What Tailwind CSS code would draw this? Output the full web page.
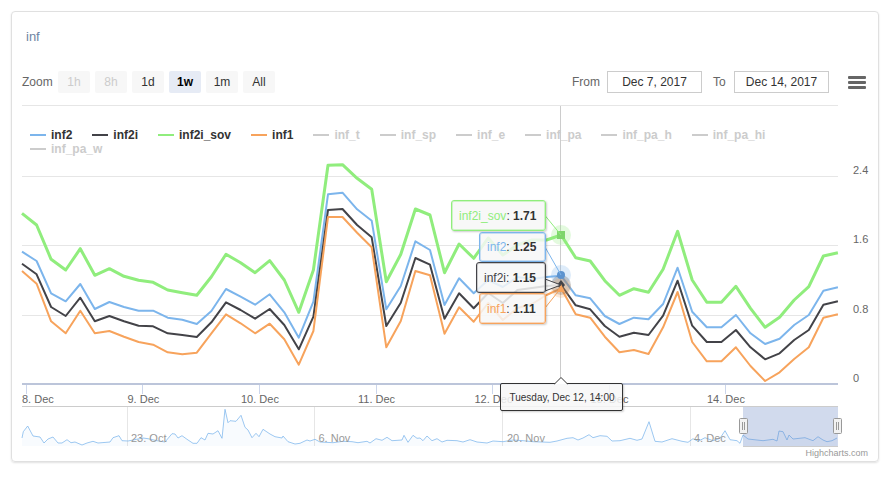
<!DOCTYPE html>
<html lang="en">
<head>
  <meta charset="UTF-8" />
  <title>inf</title>
  <script src="https://cdn.jsdelivr.net/npm/@tailwindcss/browser@4"></script>
</head>
<body class="bg-white font-['Liberation_Sans',Arial,sans-serif]">
  <div class="p-[11px] w-[885px] h-[484px]">
    <!-- Card -->
    <div class="relative w-[868px] h-[451px] border border-[#e0e0e0] rounded-[4px] shadow-[0_1px_2px_rgba(0,0,0,0.12)]">
      <h1 class="pt-[17px] pl-[14px] text-[13px] leading-[16px] text-[#6e84a3]">inf</h1>

      <!-- Range selector -->
      <div class="mt-[26px] ml-[10px] w-[844px] h-[22px] flex items-center text-[12px] text-[#666]">
        <span class="w-[36px]">Zoom</span>
        <div class="flex gap-[5px]">
          <button class="w-[32px] h-[22px] rounded-[2px] bg-[#f7f7f7] text-[#ccc]">1h</button>
          <button class="w-[32px] h-[22px] rounded-[2px] bg-[#f7f7f7] text-[#ccc]">8h</button>
          <button class="w-[32px] h-[22px] rounded-[2px] bg-[#f7f7f7] text-[#333]">1d</button>
          <button class="w-[32px] h-[22px] rounded-[2px] bg-[#e6ebf5] text-black font-bold">1w</button>
          <button class="w-[32px] h-[22px] rounded-[2px] bg-[#f7f7f7] text-[#333]">1m</button>
          <button class="w-[32px] h-[22px] rounded-[2px] bg-[#f7f7f7] text-[#333]">All</button>
        </div>
        <span class="ml-[297px] w-[35px]">From</span>
        <div class="w-[95px] h-[22px] border border-[#ccc] flex items-center justify-center text-[#333]">Dec 7, 2017</div>
        <span class="ml-[11px] w-[21px]">To</span>
        <div class="w-[95px] h-[22px] border border-[#ccc] flex items-center justify-center text-[#333]">Dec 14, 2017</div>
        <div class="ml-[19px] mt-[1px] w-[18px] flex flex-col gap-[2px]">
          <div class="h-[3px] rounded-[1px] bg-[#666]"></div>
          <div class="h-[3px] rounded-[1px] bg-[#666]"></div>
          <div class="h-[3px] rounded-[1px] bg-[#666]"></div>
        </div>
      </div>
      <div class="mt-[12px] ml-[10px] w-[816px] h-px bg-[#e6e6e6]"></div>

      <!-- Chart, drawn in page coordinates -->
      <svg class="block" width="866" height="355" viewBox="12 106 866 355">
        <g class="stroke-[#e6e6e6]">
          <line x1="22" x2="838" y1="176.5" y2="176.5" />
          <line x1="22" x2="838" y1="245.5" y2="245.5" />
          <line x1="22" x2="838" y1="315.5" y2="315.5" />
        </g>
        <g class="fill-[#666] text-[11px]">
          <text x="853" y="174">2.4</text>
          <text x="853" y="243">1.6</text>
          <text x="853" y="313">0.8</text>
          <text x="853" y="382">0</text>
        </g>

        <!-- crosshair -->
        <line x1="560.5" x2="560.5" y1="106" y2="384" class="stroke-[#ccc]" />

        <polyline id="s-green" fill="none" class="stroke-[#90ed7d]" stroke-width="3" stroke-linejoin="round" />
        <polyline id="s-blue" fill="none" class="stroke-[#7cb5ec]" stroke-width="2" stroke-linejoin="round" />
        <polyline id="s-black" fill="none" class="stroke-[#434348]" stroke-width="2" stroke-linejoin="round" />
        <polyline id="s-orange" fill="none" class="stroke-[#f7a35c]" stroke-width="2" stroke-linejoin="round" />

        <!-- x axis -->
        <line x1="22" x2="838" y1="384" y2="384" class="stroke-[#bcc5da]" stroke-width="2" />
        <g class="stroke-[#ccd6eb]">
          <line x1="26.5" x2="26.5" y1="385" y2="394" />
          <line x1="142.5" x2="142.5" y1="385" y2="394" />
          <line x1="259.5" x2="259.5" y1="385" y2="394" />
          <line x1="376.5" x2="376.5" y1="385" y2="394" />
          <line x1="492.5" x2="492.5" y1="385" y2="394" />
          <line x1="609.5" x2="609.5" y1="385" y2="394" />
          <line x1="725.5" x2="725.5" y1="385" y2="394" />
        </g>
        <g class="fill-[#666] text-[11px]">
          <text x="22" y="403">8. Dec</text>
          <text x="127.5" y="403">9. Dec</text>
          <text x="241" y="403">10. Dec</text>
          <text x="358" y="403">11. Dec</text>
          <text x="474.5" y="403">12. Dec</text>
          <text x="590.5" y="403">13. Dec</text>
          <text x="707" y="403">14. Dec</text>
        </g>

        <!-- navigator -->
        <g class="stroke-[#e6e6e6]">
          <line x1="127.5" x2="127.5" y1="406" y2="446" />
          <line x1="314.5" x2="314.5" y1="406" y2="446" />
          <line x1="502.5" x2="502.5" y1="406" y2="446" />
          <line x1="690.5" x2="690.5" y1="406" y2="446" />
        </g>
        <polygon id="nav-area" class="fill-[#7cb5ec]/5" />
        <polyline id="nav-line" fill="none" class="stroke-[#7cb5ec]/75" stroke-width="1" stroke-linejoin="round" />
        <g class="fill-[#999] text-[11px]">
          <text x="131" y="442">23. Oct</text>
          <text x="318.5" y="442">6. Nov</text>
          <text x="507" y="442">20. Nov</text>
          <text x="694" y="442">4. Dec</text>
        </g>
        <rect x="743" y="406" width="95" height="40" class="fill-[#6685c2]/30" />
        <path d="M22 406.5H838M743 446.5H838" fill="none" class="stroke-[#ccc]" />
        <g class="fill-[#f2f2f2] stroke-[#999]">
          <rect x="739.5" y="418.5" width="8" height="15" rx="1" />
          <rect x="833.5" y="418.5" width="8" height="15" rx="1" />
          <path d="M742.5 422V430M744.5 422V430M836.5 422V430M838.5 422V430" fill="none" />
        </g>
        <text x="868" y="456" text-anchor="end" class="fill-[#999] text-[9px]">Highcharts.com</text>

        <!-- hover markers -->
        <circle cx="561" cy="235" r="10" class="fill-[#90ed7d]/25" />
        <circle cx="561" cy="275" r="10" class="fill-[#7cb5ec]/25" />
        <circle cx="561" cy="285" r="10" class="fill-[#434348]/25" />
        <circle cx="561" cy="288" r="10" class="fill-[#f7a35c]/25" />
        <rect x="557" y="231" width="8" height="8" class="fill-[#7ed56c]" />
        <circle cx="561" cy="275" r="4" class="fill-[#5c93cf]" />
        <polygon points="561,280 565,285 561,290 557,285" class="fill-[#434348]" />
        <polygon points="561,284 565,292 557,292" class="fill-[#f7a35c]" />

        <!-- tooltip tails -->
        <g fill="none">
          <line x1="545" y1="215.5" x2="561" y2="235" class="stroke-[#90ed7d]" />
          <line x1="545" y1="247" x2="561" y2="275" class="stroke-[#7cb5ec]" />
          <polygon points="545,279 561,285 545,291" class="fill-[#f7f7f7]/85 stroke-[#434348]" />
          <line x1="545" y1="308" x2="561" y2="288" class="stroke-[#f7a35c]" />
        </g>
      </svg>

      <!-- Legend -->
      <div class="absolute left-[18px] top-[116px] w-[760px] flex flex-wrap gap-x-[20px] text-[12px] leading-[14px] font-bold text-[#333]">
        <div class="flex items-center gap-[5px]"><i class="w-4 h-[2px] bg-[#7cb5ec]"></i>inf2</div>
        <div class="flex items-center gap-[5px]"><i class="w-4 h-[2px] bg-[#434348]"></i>inf2i</div>
        <div class="flex items-center gap-[5px]"><i class="w-4 h-[2px] bg-[#90ed7d]"></i>inf2i_sov</div>
        <div class="flex items-center gap-[5px]"><i class="w-4 h-[2px] bg-[#f7a35c]"></i>inf1</div>
        <div class="flex items-center gap-[5px] text-[#ccc]"><i class="w-4 h-[2px] bg-[#ccc]"></i>inf_t</div>
        <div class="flex items-center gap-[5px] text-[#ccc]"><i class="w-4 h-[2px] bg-[#ccc]"></i>inf_sp</div>
        <div class="flex items-center gap-[5px] text-[#ccc]"><i class="w-4 h-[2px] bg-[#ccc]"></i>inf_e</div>
        <div class="flex items-center gap-[5px] text-[#ccc]"><i class="w-4 h-[2px] bg-[#ccc]"></i>inf_pa</div>
        <div class="flex items-center gap-[5px] text-[#ccc]"><i class="w-4 h-[2px] bg-[#ccc]"></i>inf_pa_h</div>
        <div class="flex items-center gap-[5px] text-[#ccc]"><i class="w-4 h-[2px] bg-[#ccc]"></i>inf_pa_hi</div>
        <div class="flex items-center gap-[5px] text-[#ccc]"><i class="w-4 h-[2px] bg-[#ccc]"></i>inf_pa_w</div>
      </div>

      <!-- Series tooltips -->
      <div class="absolute left-[439px] top-[188px] w-[95px] h-[31px] flex items-center pl-[7px] rounded-[3px] border border-[#90ed7d] bg-[#f7f7f7]/85 shadow-[inset_0_0_0_1px_rgba(144,237,125,0.4),1px_1px_2px_rgba(0,0,0,0.2)] text-[12px] text-[#333]"><span><span class="text-[#90ed7d]">inf2i_sov</span>: <b>1.71</b></span></div>
      <div class="absolute left-[467px] top-[220px] w-[67px] h-[30px] flex items-center pl-[7px] rounded-[3px] border border-[#7cb5ec] bg-[#f7f7f7]/85 shadow-[inset_0_0_0_1px_rgba(124,181,236,0.4),1px_1px_2px_rgba(0,0,0,0.2)] text-[12px] text-[#333]"><span><span class="text-[#7cb5ec]">inf2</span>: <b>1.25</b></span></div>
      <div class="absolute left-[464px] top-[250px] w-[70px] h-[31px] flex items-center pl-[7px] rounded-[3px] border border-[#434348] bg-[#f7f7f7]/85 shadow-[inset_0_0_0_1px_rgba(67,67,72,0.25),1px_1px_2px_rgba(0,0,0,0.2)] text-[12px] text-[#333]"><span><span class="text-[#434348]">inf2i</span>: <b>1.15</b></span></div>
      <div class="absolute left-[467px] top-[281px] w-[67px] h-[31px] flex items-center pl-[7px] rounded-[3px] border border-[#f7a35c] bg-[#f7f7f7]/85 shadow-[inset_0_0_0_1px_rgba(247,163,92,0.4),1px_1px_2px_rgba(0,0,0,0.2)] text-[12px] text-[#333]"><span><span class="text-[#f7a35c]">inf1</span>: <b>1.11</b></span></div>

      <!-- Date tooltip -->
      <div class="absolute left-[488px] top-[371px] w-[123px] h-[28px] flex items-center justify-center pl-[1px] rounded-[2px] border border-[#333] bg-[#f7f7f7]/85 shadow-[1px_1px_2px_rgba(0,0,0,0.2)] text-[10px] text-[#333]">
        Tuesday, Dec 12, 14:00
        <svg class="absolute left-[53px] top-[-7px]" width="14" height="8" viewBox="0 0 14 8"><path d="M0 7.5L7 .5L14 7.5" class="fill-white stroke-[#333]" /></svg>
      </div>
    </div>
  </div>

  <script>
    const green = [213.3,225,259.3,270,248.7,275.3,268.7,276.3,280.3,282.3,290,292.7,295.3,276.7,254.3,262.7,272.7,260.7,280,312.3,270,165.3,164.7,178.3,189.3,281.7,254.3,209,215,272.7,244,258.3,238,255,245,240,240,235,257.7,261,280.7,295.3,288.7,292.3,269.3,231.3,280,302.3,302.3,286.3,308.3,327.3,317.3,300,286.7,256,252.7];
    const blue = [251.7,261,293.3,301.3,284,309,302,307,310.7,310.7,317.7,319.7,324,311,289,296.7,304.7,294.3,312.3,337.7,301.7,194.3,192.7,209.3,220.7,309.3,286,241.3,250,305,278.3,293.3,280,287,277,279,277,275.7,295.3,298.3,316,324,317.7,319.3,304,267.7,311.7,327.3,327.3,315,333.3,344,338.7,325,315,290.7,287.3];
    const black = [263.7,274.3,307,316,297.7,321.3,316,321.3,325.7,326.3,333.3,335,337,322.3,302.3,310,318.7,309,325,349.3,316.7,210,209,225,237.3,326,302.7,258,264.7,318.7,293.3,308.3,293,303,290,288,286,285,305.3,309.3,326,336.7,332.7,335,315.7,280.7,325.7,342,342,330,347.3,359.3,353.3,340,330,304.7,301.3];
    const orange = [271,283.7,321.3,333.3,310.7,333.3,331,336.7,342,344.7,352.3,354.3,352.7,333.3,314.3,323.3,333.3,323.7,339.3,364.7,331,217,217,232.7,247.3,347.3,321,271,275.3,333.7,307.3,321.7,303,320,308,304,295,288.3,314.3,317.7,336.7,352.3,350,354,327.3,292,342,361.3,361.3,347.3,366,381,372.3,359,347.3,317.7,314.3];

    const toPoints = ys => ys.map((y, i) => (22 + i * 14.57).toFixed(1) + "," + y).join(" ");
    document.getElementById("s-green").setAttribute("points", toPoints(green));
    document.getElementById("s-blue").setAttribute("points", toPoints(blue));
    document.getElementById("s-black").setAttribute("points", toPoints(black));
    document.getElementById("s-orange").setAttribute("points", toPoints(orange));

    // navigator series, x/y pairs read off the page
    const nav = "22,438 23.3,431.7 27.7,426 33,436 40,437 44,443 48,439 53,437 58,443 62,443 67,439.7 71,442.7 75,442 82,445 87,443 93,441.3 98,443 110,442 113,437.7 119,435.7 122,440.7 128,441 133,440 143,438 148,438.7 157,440.7 165,442 172,433.7 175,434 178,438 182,435.7 187,439.3 193,443.3 197,443.3 201,437.7 205,440 208,433.3 213,434 218,430.7 222,438.3 225,409.3 228,422.7 230,420.7 236,421.3 241,415.3 245,427.3 248,430 252,437.7 256,433.3 259,436.7 263,429.3 270,434 275,436.7 282,438 283,436 288,441.7 295,444 300,443.3 307,440 310,441 315,439.3 320,442 333,442.7 343,441.3 352,441.7 358,442.7 367,441.3 370,443 376,438.7 382,440.3 387,437.3 392,440.7 402,440 404,435.3 408,442.3 413,435.3 417,438.3 420,438 423,440.7 427,436 432,440.7 437,438.7 442,442 447,440.3 457,440.7 463,442 470,439.7 477,442 487,443 493,441 503,441.7 513,440 523,440.7 533,441.7 550,442.3 557,441 567,438.3 573,437.7 578,440 583,438 589,434.7 593,437.7 600,435.7 607,436.3 612,441 620,440.7 630,438.3 637,440.3 642,439 649,421.7 655,441.3 662,442 672,438.7 682,441.3 688,442.3 693,438.7 698,441.3 705,437.7 713,440.7 720,438.3 725,430.7 730,439.7 737,440.7 740,443.3 743,435 748,439 763,440.7 773,439.3 777,441 779,431 783,431.7 787,440 789,435 793,439 805,437.7 813,440.7 818,436.7 823,440 827,441.7 832,440.7 837,438";
    document.getElementById("nav-line").setAttribute("points", nav);
    document.getElementById("nav-area").setAttribute("points", "22,446 " + nav + " 837,446");
  </script>
</body>
</html>
